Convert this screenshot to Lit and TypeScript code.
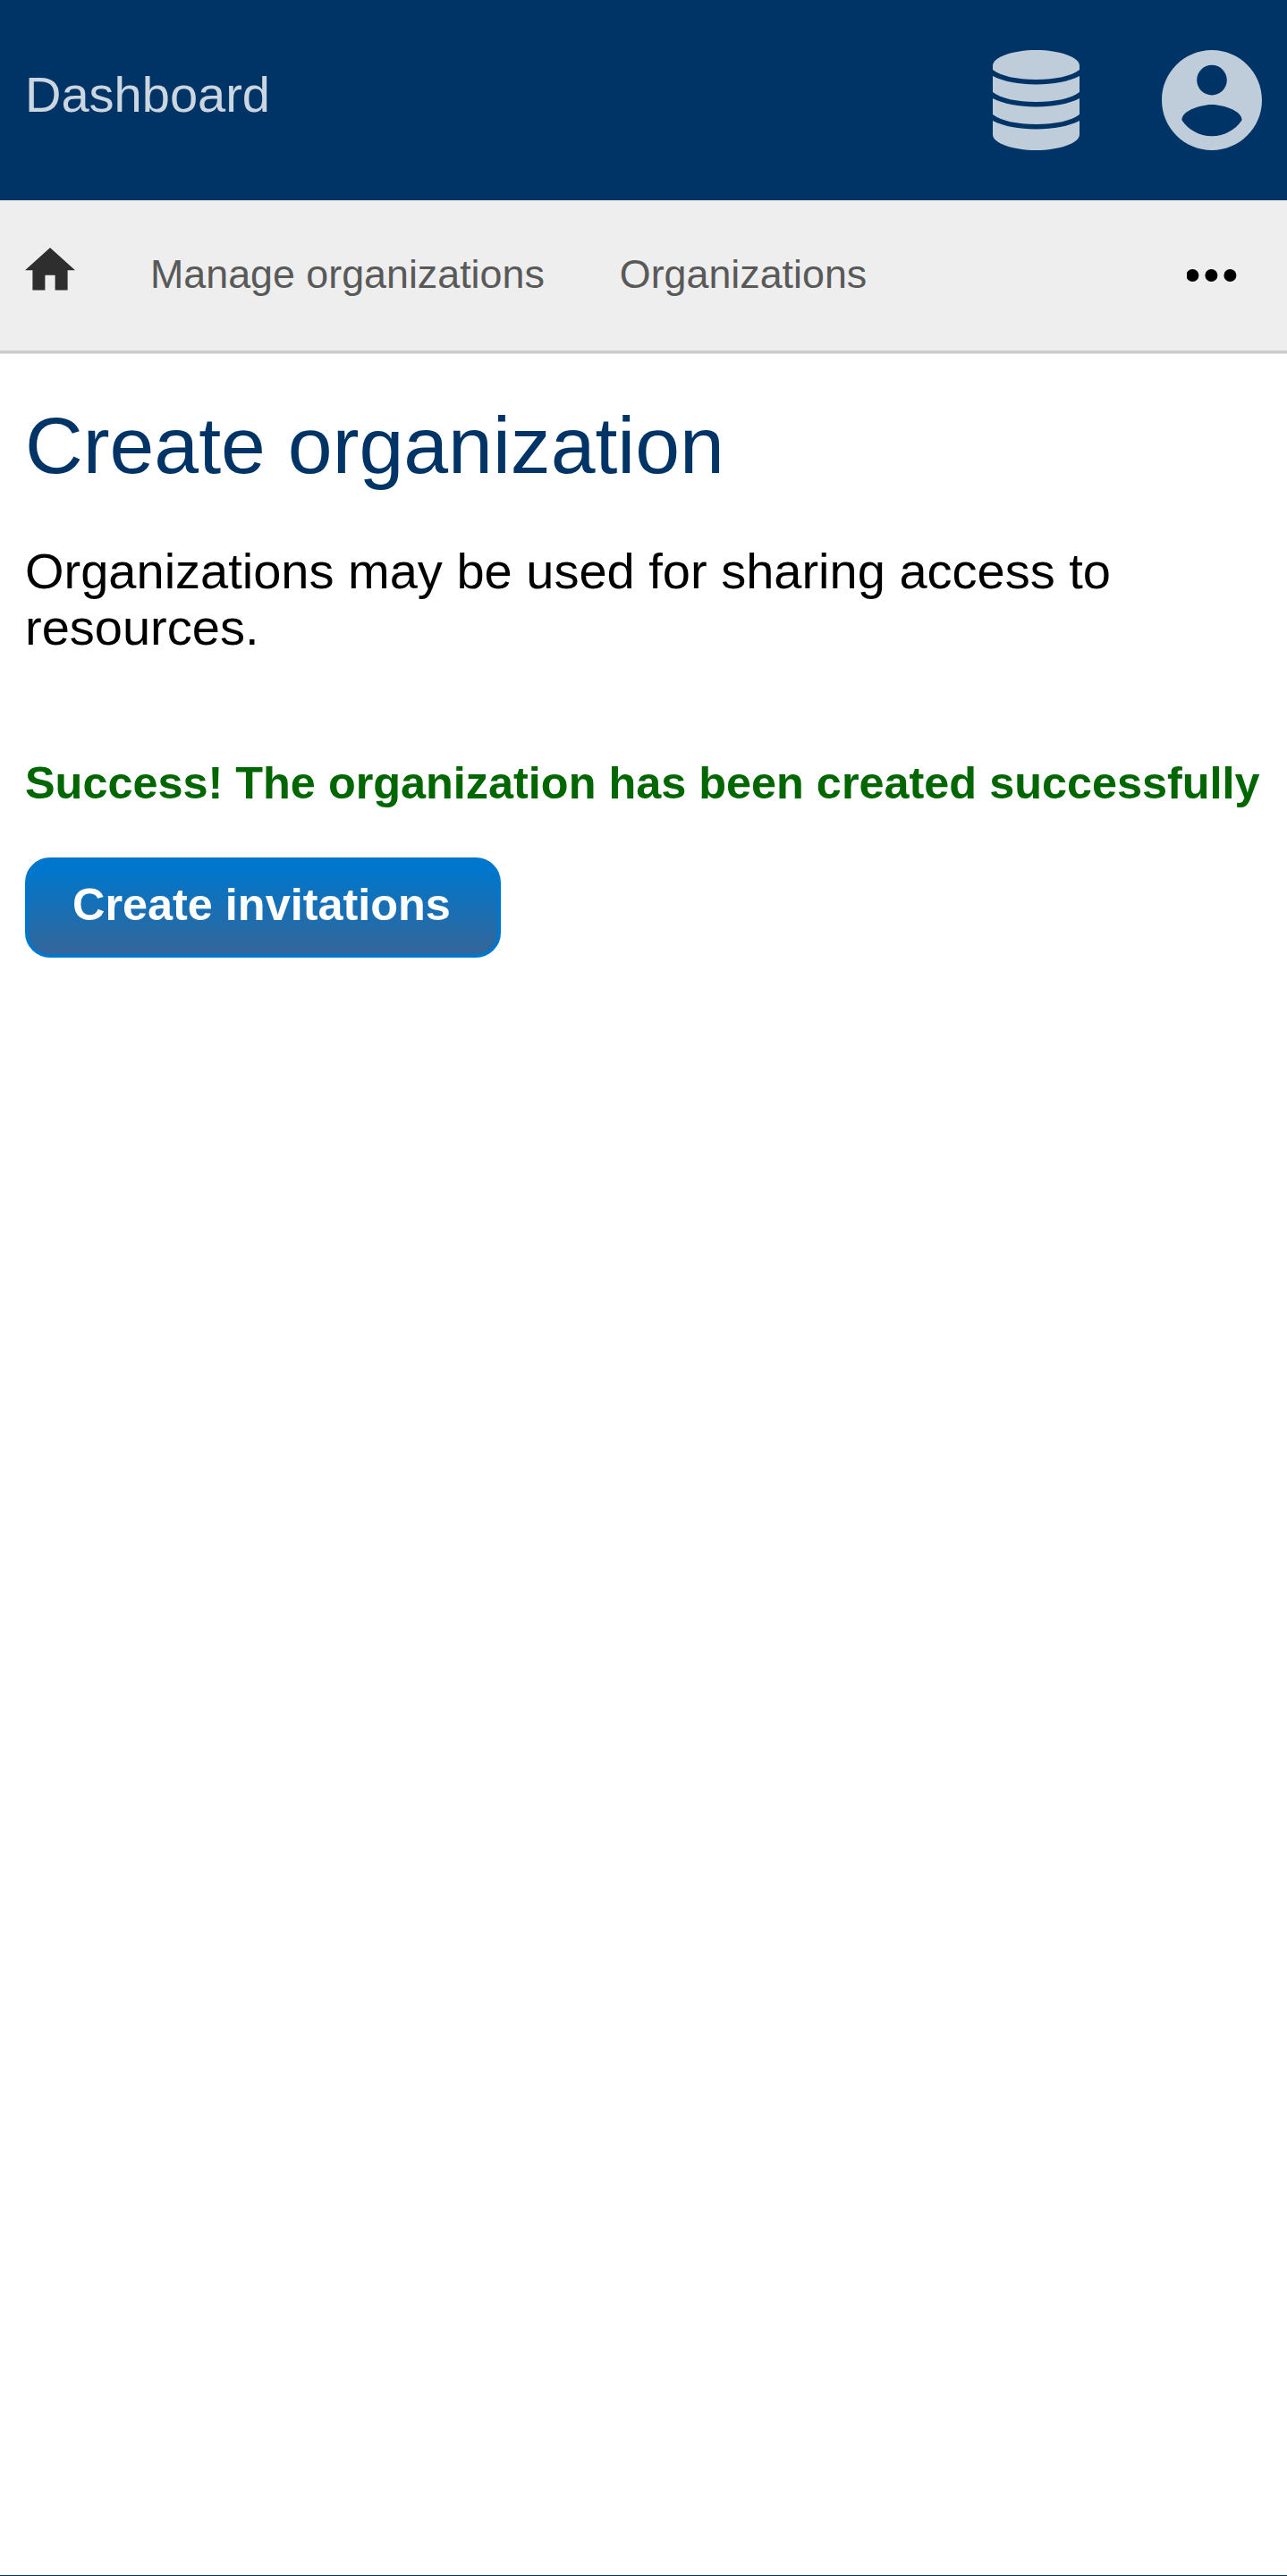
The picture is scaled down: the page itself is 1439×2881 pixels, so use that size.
import { LitElement, html, css } from "lit";
import { customElement } from "lit/decorators.js";

@customElement("app-root")
export class AppRoot extends LitElement {
  static styles = css`
    :host {
      display: flex;
      flex-direction: column;
      box-sizing: border-box;
      height: 2881px;
      background: #fff;
      border-bottom: 1px solid #003366;
      font-family: "Liberation Sans", Arial, sans-serif;
      color: #000;
    }
    svg {
      display: block;
      flex: none;
    }
    .header {
      display: flex;
      align-items: center;
      box-sizing: border-box;
      height: 224px;
      padding: 0 28px;
      background: #003366;
    }
    .brand {
      flex: 1;
      margin-top: -12px;
      font-size: 56px;
      line-height: 64px;
      color: #ccd6e0;
    }
    .tools {
      display: flex;
      align-items: center;
      gap: 91px;
      fill: #bfccd9;
    }
    .nav {
      display: flex;
      align-items: center;
      height: 168px;
      padding: 0 56px 0 28px;
      background: #eee;
      border-bottom: 3px solid #ccc;
      box-shadow: 0 1px #e2e2e2;
      font-size: 44.8px;
      line-height: 52px;
      color: #595959;
    }
    .home {
      fill: #2e2e2e;
      margin: 0 84px 14px 0;
    }
    .link {
      margin: 0 84px 4px 0;
      white-space: nowrap;
    }
    .more {
      margin-left: auto;
    }
    .main {
      display: flex;
      flex-direction: column;
      align-items: flex-start;
      padding: 52px 28px 0;
    }
    .title {
      margin: 0;
      font-size: 89.6px;
      line-height: 102px;
      font-weight: 400;
      color: #003366;
    }
    .intro {
      margin: 58px 0 0;
      font-size: 56px;
      line-height: 63px;
    }
    .success {
      margin: 114px 0 0;
      font-size: 50.4px;
      line-height: 57px;
      font-weight: 700;
      color: #006600;
      white-space: nowrap;
    }
    .button {
      box-sizing: border-box;
      width: 532px;
      height: 112px;
      margin: 55px 0 0;
      padding: 0 50px 7px 49px;
      border: 4px solid #0077cc;
      border-radius: 28px;
      background: linear-gradient(#0077cc 8%, #336699);
      font: 700 50.4px/57px "Liberation Sans", Arial, sans-serif;
      color: #fff;
      text-align: left;
      white-space: nowrap;
    }
  `;

  render() {
    return html`
      <header class="header">
        <div class="brand">Dashboard</div>
        <div class="tools">
          <svg width="98" height="112" viewBox="0 0 98 112">
            <path d="M0 17.5C0 8 22 0 48.500 0S97 8 97 17.500V22C88 29 70 33 48.500 33S9 29 0 22z" />
            <path d="M0 29C12 35 29 38.500 48.500 38.500S85 35 97 29V47C88 54 70 58 48.500 58S9 54 0 47z" />
            <path d="M0 54C12 60 29 63.500 48.500 63.500S85 60 97 54V72C88 79 70 83 48.500 83S9 79 0 72z" />
            <path d="M0 79C12 85 29 88.500 48.500 88.500S85 85 97 79V94.500C97 104 75 112 48.500 112S0 104 0 94.500z" />
          </svg>
          <svg width="112" height="112" viewBox="2 2 20 20">
            <path d="M12 2C6.480 2 2 6.480 2 12s4.480 10 10 10 10-4.480 10-10S17.520 2 12 2zm0 3c1.660 0 3 1.340 3 3s-1.340 3-3 3-3-1.340-3-3 1.340-3 3-3zm0 14.200c-2.500 0-4.710-1.280-6-3.220.03-1.990 4-3.080 6-3.080 1.990 0 5.970 1.090 6 3.080-1.290 1.940-3.500 3.220-6 3.220z" />
          </svg>
        </div>
      </header>
      <nav class="nav">
        <svg class="home" width="56" height="48" viewBox="2 3 20 17.140">
          <path d="M10 20v-6h4v6h5v-8h3L12 3 2 12h3v8z" />
        </svg>
        <span class="link">Manage organizations</span>
        <span class="link">Organizations</span>
        <svg class="more" width="56" height="14" viewBox="0 0 56 14">
          <circle cx="6.400" cy="7" r="7" />
          <circle cx="27.400" cy="7" r="7" />
          <circle cx="48.400" cy="7" r="7" />
        </svg>
      </nav>
      <main class="main">
        <h1 class="title">Create organization</h1>
        <p class="intro">Organizations may be used for sharing access to resources.</p>
        <p class="success">Success! The organization has been created successfully</p>
        <button class="button">Create invitations</button>
      </main>
    `;
  }
}
